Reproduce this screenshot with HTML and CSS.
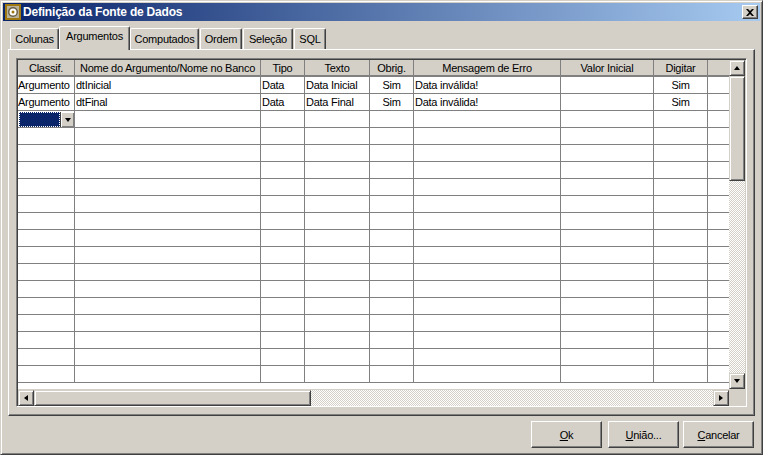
FILE: index.html
```html
<!DOCTYPE html>
<html>
  <head>
    <title>Definição da Fonte de Dados</title>
    <link rel="stylesheet" href="styles.css">
  </head>
  <body>
    <div class="window">
      <div class="titlebar">
        <svg class="app-icon" width="16" height="16" viewBox="0 0 16 16">
          <rect width="16" height="16" fill="#a07810"/>
          <rect x="2" y="2" width="12" height="12" fill="#b8b098"/>
          <circle cx="8" cy="8" r="5" fill="#6b6048"/>
          <circle cx="8" cy="8" r="3.500" fill="#fff"/>
          <circle cx="8" cy="8" r="1.500" fill="#a07810"/>
        </svg>
        <span class="title">Definição da Fonte de Dados</span>
        <div class="close">
          <svg width="8" height="7" viewBox="0 0 8 7"><path d="M0 0h2l2 2 2-2h2L5 3.500 8 7H6L4 5 2 7H0l3-3.500z" fill="#000"/></svg>
        </div>
      </div>

      <div class="content">
        <div class="tabs">
          <div class="tab tab-colunas">Colunas</div>
          <div class="tab tab-active">Argumentos</div>
          <div class="tab tab-computados">Computados</div>
          <div class="tab tab-ordem">Ordem</div>
          <div class="tab tab-selecao">Seleção</div>
          <div class="tab tab-sql">SQL</div>
        </div>

        <div class="pane">
          <div class="grid-frame">
            <div class="grid-top">
              <div class="grid-body">
                <table class="grid">
                  <colgroup>
                    <col class="c1"><col class="c2"><col class="c3"><col class="c4"><col class="c5"><col class="c6"><col class="c7"><col class="c8"><col class="c9">
                  </colgroup>
                  <thead>
                    <tr>
                      <th>Classif.</th>
                      <th>Nome do Argumento/Nome no Banco</th>
                      <th>Tipo</th>
                      <th>Texto</th>
                      <th>Obrig.</th>
                      <th>Mensagem de Erro</th>
                      <th>Valor Inicial</th>
                      <th>Digitar</th>
                      <th class="last"></th>
                    </tr>
                  </thead>
                  <tbody>
                    <tr>
                      <td class="tight">Argumento</td><td>dtInicial</td><td>Data</td><td>Data Inicial</td><td class="center">Sim</td><td>Data inválida!</td><td></td><td class="center">Sim</td><td class="last"></td>
                    </tr>
                    <tr>
                      <td class="tight">Argumento</td><td>dtFinal</td><td>Data</td><td>Data Final</td><td class="center">Sim</td><td>Data inválida!</td><td></td><td class="center">Sim</td><td class="last"></td>
                    </tr>
                    <tr>
                      <td class="editing">
                        <div class="combo">
                          <div class="combo-value"></div>
                          <div class="combo-btn"><span class="arrow-down"></span></div>
                        </div>
                      </td>
                      <td></td><td></td><td></td><td></td><td></td><td></td><td></td><td class="last"></td>
                    </tr>
                    <tr><td></td><td></td><td></td><td></td><td></td><td></td><td></td><td></td><td class="last"></td></tr>
                    <tr><td></td><td></td><td></td><td></td><td></td><td></td><td></td><td></td><td class="last"></td></tr>
                    <tr><td></td><td></td><td></td><td></td><td></td><td></td><td></td><td></td><td class="last"></td></tr>
                    <tr><td></td><td></td><td></td><td></td><td></td><td></td><td></td><td></td><td class="last"></td></tr>
                    <tr><td></td><td></td><td></td><td></td><td></td><td></td><td></td><td></td><td class="last"></td></tr>
                    <tr><td></td><td></td><td></td><td></td><td></td><td></td><td></td><td></td><td class="last"></td></tr>
                    <tr><td></td><td></td><td></td><td></td><td></td><td></td><td></td><td></td><td class="last"></td></tr>
                    <tr><td></td><td></td><td></td><td></td><td></td><td></td><td></td><td></td><td class="last"></td></tr>
                    <tr><td></td><td></td><td></td><td></td><td></td><td></td><td></td><td></td><td class="last"></td></tr>
                    <tr><td></td><td></td><td></td><td></td><td></td><td></td><td></td><td></td><td class="last"></td></tr>
                    <tr><td></td><td></td><td></td><td></td><td></td><td></td><td></td><td></td><td class="last"></td></tr>
                    <tr><td></td><td></td><td></td><td></td><td></td><td></td><td></td><td></td><td class="last"></td></tr>
                    <tr><td></td><td></td><td></td><td></td><td></td><td></td><td></td><td></td><td class="last"></td></tr>
                    <tr><td></td><td></td><td></td><td></td><td></td><td></td><td></td><td></td><td class="last"></td></tr>
                    <tr><td></td><td></td><td></td><td></td><td></td><td></td><td></td><td></td><td class="last"></td></tr>
                  </tbody>
                </table>
              </div>

              <div class="vscroll">
                <div class="sb-btn"><span class="arrow-up"></span></div>
                <div class="sb-thumb vthumb"></div>
                <div class="sb-track"></div>
                <div class="sb-btn"><span class="arrow-down"></span></div>
              </div>
            </div>

            <div class="hscroll">
              <div class="sb-btn"><span class="arrow-left"></span></div>
              <div class="sb-thumb hthumb"></div>
              <div class="sb-track"></div>
              <div class="sb-btn"><span class="arrow-right"></span></div>
              <div class="sb-corner"></div>
            </div>
          </div>
        </div>

        <div class="buttons">
          <button class="btn" type="button"><u>O</u>k</button>
          <button class="btn btn-uniao" type="button"><u>U</u>nião...</button>
          <button class="btn" type="button"><u>C</u>ancelar</button>
        </div>
      </div>
    </div>
  </body>
</html>
```

FILE: styles.css
```css
* {
  box-sizing: border-box;
}

body {
  margin: 0;
  width: 763px;
  height: 455px;
  overflow: hidden;
  background: #d4d0c8;
  font-family: "Liberation Sans", Arial, sans-serif;
  font-size: 11px;
  letter-spacing: -0.25px;
  color: #000;
}

/* Window frame */
.window {
  width: 763px;
  height: 455px;
  display: flex;
  flex-direction: column;
  padding: 2px;
  border: 1px solid;
  border-color: #d4d0c8 #404040 #404040 #d4d0c8;
  box-shadow: inset 1px 1px 0 #fff, inset -1px -1px 0 #808080;
}

.titlebar {
  height: 18px;
  flex: none;
  display: flex;
  align-items: center;
  padding: 0 2px;
  background: linear-gradient(to right, #0a246a, #a6caf0);
}

.app-icon {
  flex: none;
}

.title {
  flex: 1;
  margin-left: 2px;
  color: #fff;
  font-size: 12px;
  font-weight: bold;
  letter-spacing: -0.2px;
  white-space: nowrap;
}

.close {
  width: 16px;
  height: 14px;
  display: flex;
  align-items: center;
  justify-content: center;
  background: #d4d0c8;
  border: 1px solid;
  border-color: #fff #404040 #404040 #fff;
  box-shadow: inset -1px -1px 0 #808080;
}

.content {
  flex: 1;
  display: flex;
  flex-direction: column;
  padding: 5px 5px 0 5px;
}

/* Tabs */
.tabs {
  height: 23px;
  flex: none;
  display: flex;
  align-items: flex-end;
  padding-left: 2px;
}

.tab {
  height: 21px;
  padding: 4px 0 0;
  text-align: center;
  background: #d4d0c8;
  border-top: 1px solid #fff;
  border-left: 1px solid #fff;
  border-right: 1px solid #404040;
  border-radius: 2px 2px 0 0;
  box-shadow: inset -1px 0 0 #808080;
  white-space: nowrap;
}

.tab-colunas {
  width: 49px;
}

.tab-active {
  width: 71px;
  height: 24px;
  margin-bottom: -1px;
  padding-top: 3px;
  position: relative;
  z-index: 1;
}

.tab-computados {
  width: 69px;
}

.tab-ordem {
  width: 42px;
  margin-left: 1px;
}

.tab-selecao {
  width: 50px;
  margin-left: 1px;
}

.tab-sql {
  width: 32px;
  margin-left: 1px;
}

.pane {
  height: 367px;
  width: 747px;
  flex: none;
  padding: 8px 7px;
  border: 1px solid;
  border-color: #fff #404040 #404040 #fff;
  box-shadow: inset -1px -1px 0 #808080;
}

/* Grid */
.grid-frame {
  height: 349px;
  display: flex;
  flex-direction: column;
  border: 1px solid;
  border-color: #808080 #fff #fff #808080;
  box-shadow: inset 1px 1px 0 #404040;
  padding: 1px;
  background: #d4d0c8;
}

.grid-top {
  height: 329px;
  flex: none;
  display: flex;
}

.grid-body {
  width: 711px;
  flex: none;
  background: #fff;
  overflow: hidden;
}

.grid {
  width: 711px;
  table-layout: fixed;
  border-collapse: separate;
  border-spacing: 0;
}

.c1 { width: 57px; }
.c2 { width: 186px; }
.c3 { width: 44px; }
.c4 { width: 65px; }
.c5 { width: 44px; }
.c6 { width: 147px; }
.c7 { width: 93px; }
.c8 { width: 54px; }
.c9 { width: 21px; }

.grid th {
  height: 17px;
  padding: 0;
  font-weight: normal;
  background: #d4d0c8;
  border-right: 1px solid #808080;
  border-bottom: 2px solid #808080;
  white-space: nowrap;
  overflow: hidden;
}

.grid td {
  height: 17px;
  padding: 0 0 0 1px;
  border-right: 1px solid #808080;
  border-bottom: 1px solid #808080;
  white-space: nowrap;
  overflow: hidden;
}

.grid .last {
  border-right: 0;
}

.grid .tight {
  padding-left: 0;
}

.grid .center {
  padding-left: 0;
  text-align: center;
}

.grid .editing {
  padding: 1px 0 0 1px;
}

.combo {
  height: 15px;
  display: flex;
}

.combo-value {
  width: 41px;
  background: #0a246a;
  outline: 1px dotted #fff;
  outline-offset: -1px;
}

.combo-btn {
  width: 14px;
  display: flex;
  align-items: center;
  justify-content: center;
  background: #d4d0c8;
  border-left: 1px solid #404040;
  box-shadow: inset 1px 1px 0 #fff, inset -1px -1px 0 #808080;
}

/* Scrollbars */
.vscroll {
  width: 16px;
  flex: none;
  display: flex;
  flex-direction: column;
}

.hscroll {
  height: 16px;
  flex: none;
  display: flex;
  margin-top: 1px;
}

.sb-btn {
  width: 16px;
  height: 16px;
  flex: none;
  display: flex;
  align-items: center;
  justify-content: center;
  background: #d4d0c8;
  border: 1px solid;
  border-color: #d4d0c8 #404040 #404040 #d4d0c8;
  box-shadow: inset 1px 1px 0 #fff, inset -1px -1px 0 #808080;
}

.sb-thumb {
  flex: none;
  background: #d4d0c8;
  border: 1px solid;
  border-color: #d4d0c8 #404040 #404040 #d4d0c8;
  box-shadow: inset 1px 1px 0 #fff, inset -1px -1px 0 #808080;
}

.vthumb {
  height: 105px;
}

.hthumb {
  width: 277px;
}

.sb-track {
  flex: 1;
  background: repeating-conic-gradient(#d4d0c8 0 25%, #fff 0 50%) 0 0 / 2px 2px;
}

.sb-corner {
  width: 16px;
  flex: none;
}

.arrow-up,
.arrow-down {
  width: 0;
  height: 0;
  border-left: 3.5px solid transparent;
  border-right: 3.5px solid transparent;
}

.arrow-up {
  border-bottom: 4px solid #000;
}

.arrow-down {
  border-top: 4px solid #000;
}

.arrow-left,
.arrow-right {
  width: 0;
  height: 0;
  border-top: 3.5px solid transparent;
  border-bottom: 3.5px solid transparent;
}

.arrow-left {
  border-right: 4px solid #000;
}

.arrow-right {
  border-left: 4px solid #000;
}

/* Bottom buttons */
.buttons {
  flex: 1;
  display: flex;
  justify-content: flex-end;
  gap: 4px;
  padding: 5px 1px 0 0;
}

.btn {
  width: 71px;
  height: 27px;
  padding: 0;
  background: #d4d0c8;
  font-family: "Liberation Sans", Arial, sans-serif;
  font-size: 11px;
  letter-spacing: -0.25px;
  color: #000;
  border: 1px solid;
  border-color: #fff #404040 #404040 #fff;
  box-shadow: inset -1px -1px 0 #808080;
}

.btn-uniao {
  margin-left: 2px;
}
```
